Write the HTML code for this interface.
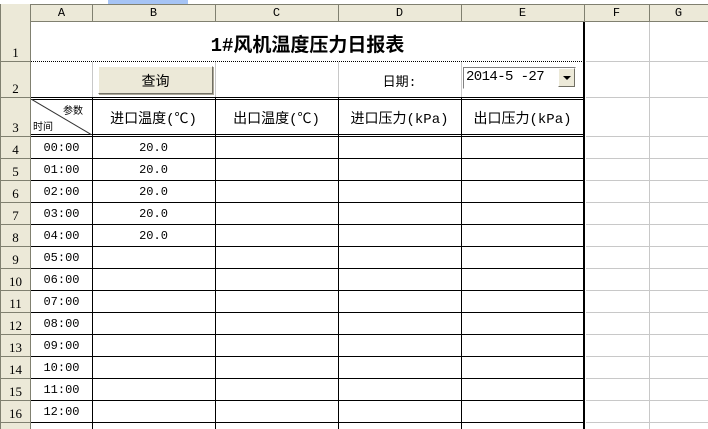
<!DOCTYPE html>
<html><head><meta charset="utf-8"><style>
*{margin:0;padding:0;box-sizing:border-box}
body{width:708px;height:429px;overflow:hidden;background:#fff;position:relative;font-family:"Liberation Mono","Noto Sans CJK SC",monospace;font-size:12px;color:#000}
div{position:absolute}
.h{background:#ece9d8}
.t{white-space:nowrap;text-align:center}
.bl{background:#000}
.g{background:#c8c8c8}
.cj{font-family:"Liberation Mono","Noto Sans CJK SC",monospace}
.rn{left:0;width:31px;text-align:center;font-size:13px;font-family:"Liberation Serif",serif}
</style></head><body>
<div style="left:0;top:0;width:708px;height:4px;background:#fff"></div>
<div style="left:108px;top:0;width:80px;height:4px;background:#a6c4f5"></div>
<div class="h" style="left:0;top:4px;width:708px;height:18px;border-top:1px solid #808070;border-bottom:1px solid #808070"></div>
<div class="h" style="left:0;top:4px;width:31px;height:425px;border-right:1px solid #808070"></div>
<div style="left:0;top:4px;width:1px;height:425px;background:#808070"></div>
<div style="left:92px;top:4px;width:1px;height:18px;background:#808070"></div>
<div style="left:215px;top:4px;width:1px;height:18px;background:#808070"></div>
<div style="left:338px;top:4px;width:1px;height:18px;background:#808070"></div>
<div style="left:461px;top:4px;width:1px;height:18px;background:#808070"></div>
<div style="left:584px;top:4px;width:1px;height:18px;background:#808070"></div>
<div style="left:649px;top:4px;width:1px;height:18px;background:#808070"></div>
<div class="t" style="left:31px;top:6px;width:61px;font-size:12px">A</div>
<div class="t" style="left:92px;top:6px;width:123px;font-size:12px">B</div>
<div class="t" style="left:215px;top:6px;width:123px;font-size:12px">C</div>
<div class="t" style="left:338px;top:6px;width:123px;font-size:12px">D</div>
<div class="t" style="left:461px;top:6px;width:123px;font-size:12px">E</div>
<div class="t" style="left:584px;top:6px;width:65px;font-size:12px">F</div>
<div class="t" style="left:649px;top:6px;width:59px;font-size:12px">G</div>
<div style="left:0;top:61px;width:31px;height:1px;background:#808070"></div>
<div style="left:0;top:97px;width:31px;height:1px;background:#808070"></div>
<div style="left:0;top:136px;width:31px;height:1px;background:#808070"></div>
<div style="left:0;top:158px;width:31px;height:1px;background:#808070"></div>
<div style="left:0;top:180px;width:31px;height:1px;background:#808070"></div>
<div style="left:0;top:202px;width:31px;height:1px;background:#808070"></div>
<div style="left:0;top:224px;width:31px;height:1px;background:#808070"></div>
<div style="left:0;top:246px;width:31px;height:1px;background:#808070"></div>
<div style="left:0;top:268px;width:31px;height:1px;background:#808070"></div>
<div style="left:0;top:290px;width:31px;height:1px;background:#808070"></div>
<div style="left:0;top:312px;width:31px;height:1px;background:#808070"></div>
<div style="left:0;top:334px;width:31px;height:1px;background:#808070"></div>
<div style="left:0;top:356px;width:31px;height:1px;background:#808070"></div>
<div style="left:0;top:378px;width:31px;height:1px;background:#808070"></div>
<div style="left:0;top:400px;width:31px;height:1px;background:#808070"></div>
<div style="left:0;top:422px;width:31px;height:1px;background:#808070"></div>
<div class="rn" style="top:45px">1</div>
<div class="rn" style="top:81px">2</div>
<div class="rn" style="top:120px">3</div>
<div class="rn" style="top:142px">4</div>
<div class="rn" style="top:164px">5</div>
<div class="rn" style="top:186px">6</div>
<div class="rn" style="top:208px">7</div>
<div class="rn" style="top:230px">8</div>
<div class="rn" style="top:252px">9</div>
<div class="rn" style="top:274px">10</div>
<div class="rn" style="top:296px">11</div>
<div class="rn" style="top:318px">12</div>
<div class="rn" style="top:340px">13</div>
<div class="rn" style="top:362px">14</div>
<div class="rn" style="top:384px">15</div>
<div class="rn" style="top:406px">16</div>
<div class="g" style="left:649px;top:22px;width:1px;height:407px"></div>
<div class="g" style="left:586px;top:61px;width:122px;height:1px"></div>
<div class="g" style="left:586px;top:97px;width:122px;height:1px"></div>
<div class="g" style="left:586px;top:136px;width:122px;height:1px"></div>
<div class="g" style="left:586px;top:158px;width:122px;height:1px"></div>
<div class="g" style="left:586px;top:180px;width:122px;height:1px"></div>
<div class="g" style="left:586px;top:202px;width:122px;height:1px"></div>
<div class="g" style="left:586px;top:224px;width:122px;height:1px"></div>
<div class="g" style="left:586px;top:246px;width:122px;height:1px"></div>
<div class="g" style="left:586px;top:268px;width:122px;height:1px"></div>
<div class="g" style="left:586px;top:290px;width:122px;height:1px"></div>
<div class="g" style="left:586px;top:312px;width:122px;height:1px"></div>
<div class="g" style="left:586px;top:334px;width:122px;height:1px"></div>
<div class="g" style="left:586px;top:356px;width:122px;height:1px"></div>
<div class="g" style="left:586px;top:378px;width:122px;height:1px"></div>
<div class="g" style="left:586px;top:400px;width:122px;height:1px"></div>
<div class="g" style="left:586px;top:422px;width:122px;height:1px"></div>
<div class="g" style="left:92px;top:62px;width:1px;height:35px"></div>
<div class="g" style="left:215px;top:62px;width:1px;height:35px"></div>
<div class="g" style="left:338px;top:62px;width:1px;height:35px"></div>
<div class="g" style="left:461px;top:62px;width:1px;height:35px"></div>
<div style="left:31px;top:61px;width:553px;height:0;border-top:1px dotted #000"></div>
<div class="t cj" style="left:31px;top:30px;width:553px;font-size:19px;font-weight:bold">1#风机温度压力日报表</div>
<div class="h" style="left:98px;top:66px;width:115px;height:28px;border:1px solid;border-color:#fff #716f64 #716f64 #fff;box-shadow:1px 1px 0 #aca899"></div>
<div class="t cj" style="left:98px;top:71px;width:115px;font-size:14px">查询</div>
<div class="t cj" style="left:338px;top:71px;width:123px;font-size:13px">日期:</div>
<div style="left:463px;top:67px;width:113px;height:22px;border:1px solid;border-color:#808080 #fff #fff #808080;background:#fff"></div>
<div style="left:466px;top:69px;font-size:14px;letter-spacing:-0.6px;font-family:'Liberation Mono',monospace">2014-5 -27</div>
<div class="h" style="left:558px;top:68px;width:17px;height:19px;border:1px solid;border-color:#fff #716f64 #716f64 #fff"></div>
<div style="left:563px;top:76px;width:0;height:0;border-left:4px solid transparent;border-right:4px solid transparent;border-top:4px solid #000"></div>
<div class="bl" style="left:31px;top:97px;width:553px;height:1px"></div>
<div class="bl" style="left:31px;top:99px;width:553px;height:1px"></div>
<div class="bl" style="left:31px;top:134px;width:553px;height:1px"></div>
<div class="bl" style="left:31px;top:136px;width:553px;height:1px"></div>
<div class="bl" style="left:31px;top:158px;width:553px;height:1px"></div>
<div class="bl" style="left:31px;top:180px;width:553px;height:1px"></div>
<div class="bl" style="left:31px;top:202px;width:553px;height:1px"></div>
<div class="bl" style="left:31px;top:224px;width:553px;height:1px"></div>
<div class="bl" style="left:31px;top:246px;width:553px;height:1px"></div>
<div class="bl" style="left:31px;top:268px;width:553px;height:1px"></div>
<div class="bl" style="left:31px;top:290px;width:553px;height:1px"></div>
<div class="bl" style="left:31px;top:312px;width:553px;height:1px"></div>
<div class="bl" style="left:31px;top:334px;width:553px;height:1px"></div>
<div class="bl" style="left:31px;top:356px;width:553px;height:1px"></div>
<div class="bl" style="left:31px;top:378px;width:553px;height:1px"></div>
<div class="bl" style="left:31px;top:400px;width:553px;height:1px"></div>
<div class="bl" style="left:31px;top:422px;width:553px;height:1px"></div>
<div class="bl" style="left:92px;top:97px;width:1px;height:332px"></div>
<div class="bl" style="left:215px;top:97px;width:1px;height:332px"></div>
<div class="bl" style="left:338px;top:97px;width:1px;height:332px"></div>
<div class="bl" style="left:461px;top:97px;width:1px;height:332px"></div>
<div class="bl" style="left:583px;top:22px;width:2px;height:407px"></div>
<svg style="position:absolute;left:31px;top:99px" width="61" height="36"><line x1="0" y1="0" x2="61" y2="36" stroke="#333" stroke-width="1"/></svg>
<div class="cj" style="left:63px;top:102px;font-size:10px">参数</div>
<div class="cj" style="left:33px;top:118px;font-size:10px">时间</div>
<div class="t cj" style="left:92px;top:108px;width:123px;font-size:14px">进口温度(℃)</div>
<div class="t cj" style="left:215px;top:108px;width:123px;font-size:14px">出口温度(℃)</div>
<div class="t cj" style="left:338px;top:108px;width:123px;font-size:14px">进口压力(kPa)</div>
<div class="t cj" style="left:461px;top:108px;width:123px;font-size:14px">出口压力(kPa)</div>
<div class="t" style="left:31px;top:141px;width:61px">00:00</div>
<div class="t" style="left:31px;top:163px;width:61px">01:00</div>
<div class="t" style="left:31px;top:185px;width:61px">02:00</div>
<div class="t" style="left:31px;top:207px;width:61px">03:00</div>
<div class="t" style="left:31px;top:229px;width:61px">04:00</div>
<div class="t" style="left:31px;top:251px;width:61px">05:00</div>
<div class="t" style="left:31px;top:273px;width:61px">06:00</div>
<div class="t" style="left:31px;top:295px;width:61px">07:00</div>
<div class="t" style="left:31px;top:317px;width:61px">08:00</div>
<div class="t" style="left:31px;top:339px;width:61px">09:00</div>
<div class="t" style="left:31px;top:361px;width:61px">10:00</div>
<div class="t" style="left:31px;top:383px;width:61px">11:00</div>
<div class="t" style="left:31px;top:405px;width:61px">12:00</div>
<div class="t" style="left:92px;top:141px;width:123px">20.0</div>
<div class="t" style="left:92px;top:163px;width:123px">20.0</div>
<div class="t" style="left:92px;top:185px;width:123px">20.0</div>
<div class="t" style="left:92px;top:207px;width:123px">20.0</div>
<div class="t" style="left:92px;top:229px;width:123px">20.0</div>
</body></html>
